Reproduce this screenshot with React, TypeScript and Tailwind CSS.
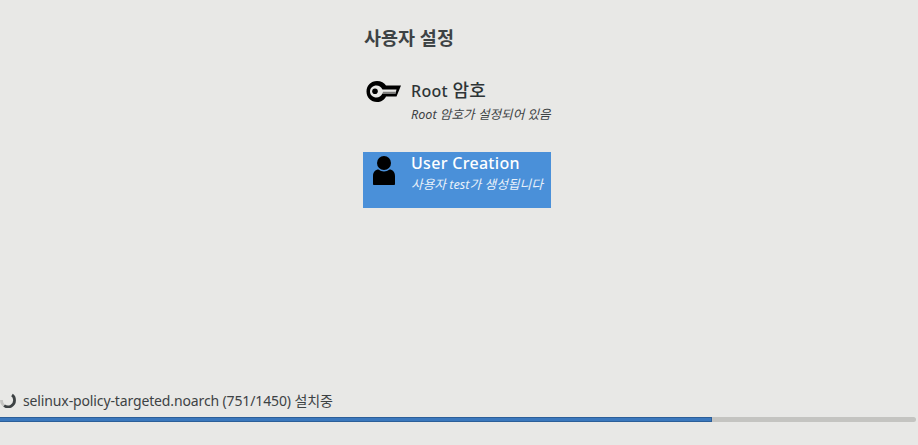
const font = { fontFamily: '"Noto Sans", "Noto Sans CJK KR", sans-serif' };

function KeyIcon() {
  return (
    <svg width="36" height="24" viewBox="0 0 36 24" className="block">
      <path
        d="M11 1C15 1 18.500 3 20 5.500H35L30.500 16.500H20C18.500 20 15 22 11 22C5 22 .5 17.500 .5 11.500S5 1 11 1Z"
        fill="#000"
      />
      <path
        d="M10.500 5.500C13 5.500 15 7 16.500 9.500H30.500L29.500 13.500H16.500C15 16 13 17.500 10.500 17.500C7 17.500 4 15 4 11.500S7 5.500 10.500 5.500Z"
        fill="#e8e8e6"
      />
      <path d="M17 11.800H30L29.500 13.800H16.500Z" fill="#7d7d7b" />
      <circle cx="9" cy="11.300" r="2.800" fill="#000" />
    </svg>
  );
}

function UserIcon() {
  return (
    <svg width="24" height="30" viewBox="0 0 24 30" className="block">
      <circle cx="11" cy="7" r="7" fill="#000" />
      <path
        d="M0 28V20C0 16 2.500 13.500 5.500 13.500C7 14.800 9 15.500 11 15.500S15 14.800 16.500 13.500C19.500 13.500 22 16 22 20V28C22 28.600 21.500 29 21 29H1C.5 29 0 28.600 0 28Z"
        fill="#000"
      />
    </svg>
  );
}

function Spinner() {
  return (
    <svg width="16" height="16" viewBox="0 0 16 16" className="block">
      <path d="M4 13.500A6.500 6.500 0 0 0 14.500 8C14.500 6 13.500 4 12 3" fill="none" stroke="#3d4244" strokeWidth="2.800" />
      <path d="M1.500 8A6.500 6.500 0 0 0 4 13.500" fill="none" stroke="#c4c4c2" strokeWidth="2.800" />
    </svg>
  );
}

export default function App() {
  return (
    <div className="w-[918px] h-[445px] bg-[#e8e8e6] flex flex-col overflow-hidden" style={font}>
      <div className="flex-1 pl-[363px] pt-[26px]">
        <h2 className="pl-px text-[18.5px] leading-6 font-semibold text-[#3d4244]">사용자 설정</h2>
        <div className="mt-[29px] w-[188px] h-[56px] flex">
          <div className="w-[48px] pl-[3px] pt-[1px]">
            <KeyIcon />
          </div>
          <div>
            <div className="text-[16px] leading-[22px] font-medium tracking-[0.3px] text-[#2e3436]">
              Root <span className="text-[18px]">암호</span>
            </div>
            <div className="text-[12.6px] leading-[18px] mt-[4px] italic text-[#3d4244] whitespace-nowrap">
              Root 암호가 설정되어 있음
            </div>
          </div>
        </div>
        <div className="mt-[17px] w-[188px] h-[56px] flex bg-[#4a90d9]">
          <div className="w-[48px] pl-[10px] pt-[4px]">
            <UserIcon />
          </div>
          <div>
            <div className="text-[16px] leading-[22px] font-medium tracking-[0.3px] text-white">User Creation</div>
            <div className="text-[12.7px] leading-[18px] mt-[1px] italic text-[#e8f0fa] whitespace-nowrap">
              사용자 test가 생성됩니다
            </div>
          </div>
        </div>
      </div>
      <div className="flex items-center h-5 gap-[7px] text-[14px] tracking-[-0.13px] text-[#3d4244]">
        <Spinner />
        <span className="whitespace-nowrap">selinux-policy-targeted.noarch (751/1450) 설치중</span>
      </div>
      <div className="mt-[7px] mb-[23px] mr-[2px] h-[5px] bg-[#c4c4c1] rounded-r-sm">
        <div className="w-[712px] h-full bg-[#3b78bd] border-y border-r border-[#2c5f99]" />
      </div>
    </div>
  );
}
